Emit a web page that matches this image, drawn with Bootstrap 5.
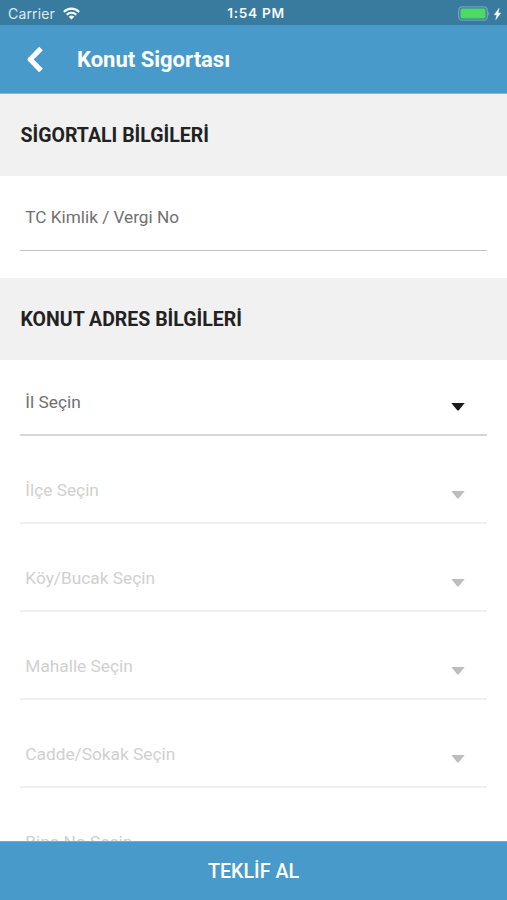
<!DOCTYPE html>
<html lang="tr">
<head>
<meta charset="utf-8">
<meta name="viewport" content="width=device-width, initial-scale=1">
<title>Konut Sigortası</title>
<link href="https://cdn.jsdelivr.net/npm/bootstrap@5.3.0/dist/css/bootstrap.min.css" rel="stylesheet">
<style>
  body { font-family: Roboto, sans-serif; color: #222; background: #fff; }
  .status-bar { height: 25px; background: #397a9f; line-height: 25px; color: #f2f8fb; padding: 2px 6px 0 8px; }
  .status-bar > div { flex: 1 1 0; }
  .carrier, .clock { font-family: Inter, sans-serif; }
  .carrier { font-size: 14px; letter-spacing: .15px; color: #dceaf2; }
  .clock { font-size: 13.7px; font-weight: 600; letter-spacing: .65px; margin-left: 3px; }
  .title-bar { height: 69px; background: #479ac9; border-bottom: 1px solid #7fb8da; padding-left: 26px; }
  .title-bar h1 { font-size: 22px; font-weight: 700; line-height: 26px; margin-left: 33px; padding-top: 1px; }
  .section-head { height: 82px; background: #f1f1f1; padding: 2px 0 0 20.5px; }
  .section-head h2 { font-size: 19.5px; font-weight: 700; line-height: 24px; }
  .field-row { height: 88px; margin: 0 20px; padding: 42px 22px 0 5.3px; border-bottom: 2px solid #f0f0f0; font-size: 17.3px; line-height: 24px; color: #d0d0d0; }
  .field-row svg { margin-top: 13px; color: #bdbdbd; }
  .field-row.is-active { height: 76px; padding-top: 30px; color: #707070; border-color: #d6d6d6; }
  .field-row.is-active svg { color: #1b1b1b; }
  .field-row.id-input { height: 75px; padding-top: 29px; font-size: 17.2px; color: #707070; border-bottom: 1px solid #c4c4c4; margin-bottom: 27px; }
  .submit-btn { height: 59px; background: #479ac9; border-top: 1px solid #6bafd5; padding-top: 8px; font-size: 19.7px; font-weight: 500; line-height: 24px; }
</style>
<script src="https://cdn.jsdelivr.net/npm/bootstrap@5.3.0/dist/js/bootstrap.bundle.min.js"></script>
</head>
<body class="vh-100 d-flex flex-column overflow-hidden">
<svg class="d-none"><symbol id="caret" viewBox="0 0 14 8"><path d="M.3 0h13.400L7.800 7.200q-.8.8-1.600 0z" fill="currentColor"/></symbol></svg>

<div class="status-bar d-flex align-items-center flex-shrink-0">
  <div class="d-flex align-items-center">
    <span class="carrier">Carrier</span>
    <svg class="ms-2" width="17" height="13" viewBox="0 0 17 13" fill="none" stroke="#fff" stroke-width="2.1"><path d="M.9 4.900C5.100.5 11.900.5 16.100 4.900M3.700 7.700C6.400 5 10.600 5 13.300 7.700"/><path d="M5.700 9.700q2.800-2.500 5.600 0L8.500 12.600z" fill="#fff" stroke="none"/></svg>
  </div>
  <span class="clock">1:54 PM</span>
  <div class="d-flex align-items-center justify-content-end">
    <svg width="32" height="15" viewBox="0 0 32 15"><rect x=".7" y=".8" width="28.600" height="13.400" rx="3.500" fill="none" stroke="#73a1bc" stroke-width="1.300"/><rect x="2.500" y="2.600" width="25" height="9.800" rx="1.500" fill="#4cd964"/><path d="M30.300 5q1.600 2.500 0 5z" fill="#84adc5"/></svg>
    <svg class="ms-1" width="7" height="12" viewBox="0 0 7 12" fill="#fff" stroke="#fff" stroke-width=".5"><path d="M5 .4.300 6.800h2.600L1.800 11.600 6.700 5H4z"/></svg>
  </div>
</div>

<header class="title-bar d-flex align-items-center text-white flex-shrink-0">
  <svg width="18" height="26" viewBox="0 0 18 26" fill="none" stroke="#fff" stroke-width="5.200" stroke-linejoin="round"><path d="M15 2.500 4.200 13.500 15 24.500"/></svg>
  <h1 class="mb-0">Konut Sigortası</h1>
</header>

<main class="flex-grow-1 overflow-hidden">
  <section>
    <div class="section-head d-flex align-items-center"><h2 class="mb-0">SİGORTALI BİLGİLERİ</h2></div>
    <div class="field-row id-input">TC Kimlik / Vergi No</div>
  </section>
  <section>
    <div class="section-head d-flex align-items-center"><h2 class="mb-0">KONUT ADRES BİLGİLERİ</h2></div>
    <div class="field-row is-active d-flex justify-content-between"><span>İl Seçin</span><svg width="14" height="8"><use href="#caret"/></svg></div>
    <div class="field-row d-flex justify-content-between"><span>İlçe Seçin</span><svg width="14" height="8"><use href="#caret"/></svg></div>
    <div class="field-row d-flex justify-content-between"><span>Köy/Bucak Seçin</span><svg width="14" height="8"><use href="#caret"/></svg></div>
    <div class="field-row d-flex justify-content-between"><span>Mahalle Seçin</span><svg width="14" height="8"><use href="#caret"/></svg></div>
    <div class="field-row d-flex justify-content-between"><span>Cadde/Sokak Seçin</span><svg width="14" height="8"><use href="#caret"/></svg></div>
    <div class="field-row d-flex justify-content-between"><span>Bina No Seçin</span><svg width="14" height="8"><use href="#caret"/></svg></div>
  </section>
</main>

<button type="button" class="submit-btn btn rounded-0 border-start-0 border-end-0 border-bottom-0 w-100 text-white flex-shrink-0">TEKLİF AL</button>
</body>
</html>
